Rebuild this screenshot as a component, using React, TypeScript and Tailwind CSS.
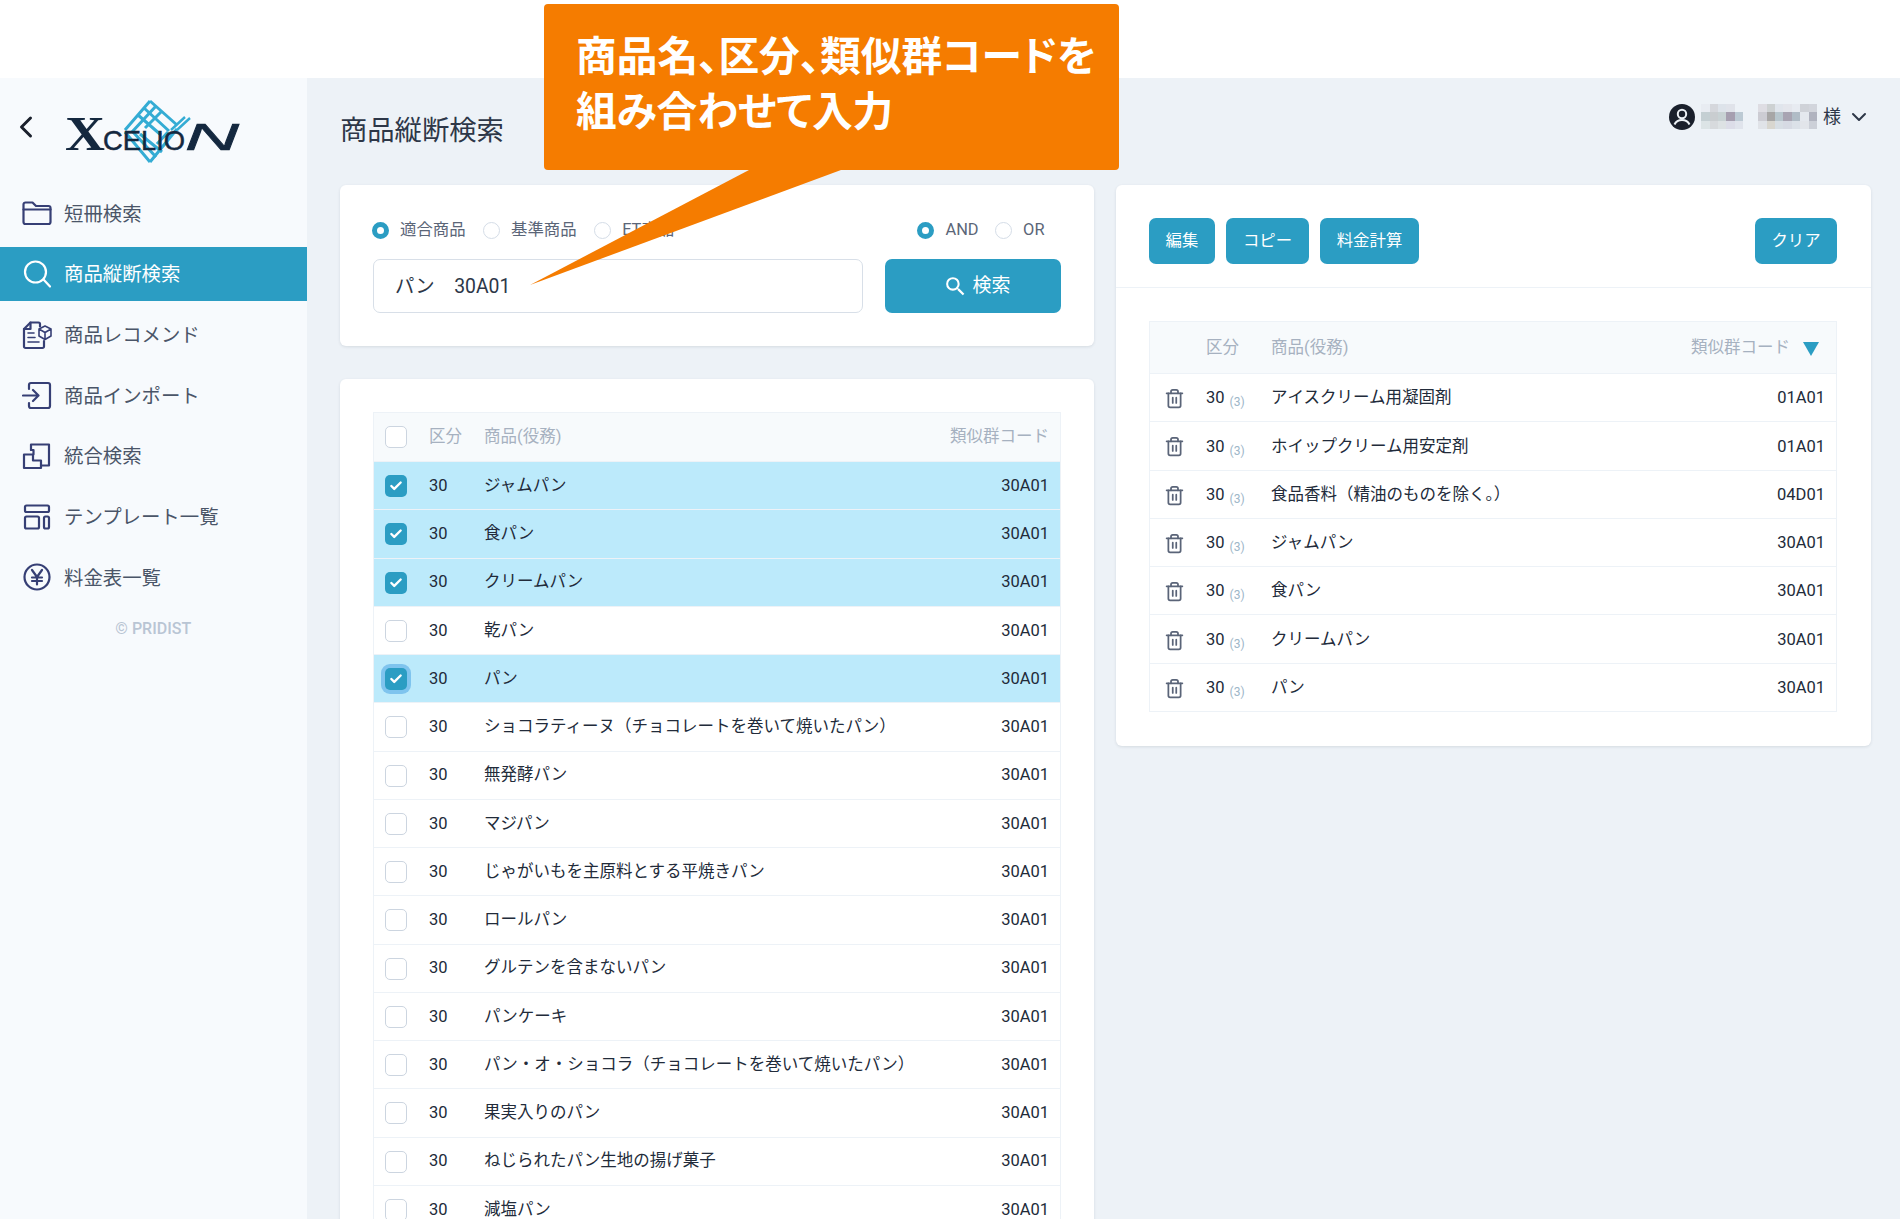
import { Check, ChevronDown, ChevronLeft, Trash2 } from "lucide-react";
import { MdSearch } from "react-icons/md";

const menuItems = [
  { label: "短冊検索", icon: "folder" },
  { label: "商品縦断検索", icon: "search", active: true },
  { label: "商品レコメンド", icon: "recommend" },
  { label: "商品インポート", icon: "import" },
  { label: "統合検索", icon: "merge" },
  { label: "テンプレート一覧", icon: "template" },
  { label: "料金表一覧", icon: "yen" },
];

const results = [
  { name: "ジャムパン", checked: true },
  { name: "食パン", checked: true },
  { name: "クリームパン", checked: true },
  { name: "乾パン" },
  { name: "パン", checked: true, focused: true },
  { name: "ショコラティーヌ（チョコレートを巻いて焼いたパン）" },
  { name: "無発酵パン" },
  { name: "マジパン" },
  { name: "じゃがいもを主原料とする平焼きパン" },
  { name: "ロールパン" },
  { name: "グルテンを含まないパン" },
  { name: "パンケーキ" },
  { name: "パン・オ・ショコラ（チョコレートを巻いて焼いたパン）" },
  { name: "果実入りのパン" },
  { name: "ねじられたパン生地の揚げ菓子" },
  { name: "減塩パン" },
];

const selected = [
  { name: "アイスクリーム用凝固剤", code: "01A01" },
  { name: "ホイップクリーム用安定剤", code: "01A01" },
  { name: "食品香料（精油のものを除く。）", code: "04D01" },
  { name: "ジャムパン", code: "30A01" },
  { name: "食パン", code: "30A01" },
  { name: "クリームパン", code: "30A01" },
  { name: "パン", code: "30A01" },
];

// mosaic over the user name
const nameBlur = [
  [
    ["#e8ecf2", "#d5d7dc", "#dde3ea", "#e0e3ea", "#edf2f7"],
    ["#c4cfd3", "#c9cdd0", "#c8d2d4", "#a69fb0", "#bccad4"],
    ["#dce4e6", "#d7dadd", "#dde2e4", "#dcdde8", "#e0e4ec"],
  ],
  [
    ["#dedde3", "#cdd1d2", "#e0e5ec", "#e4e6ec", "#e7ebf1", "#cfd2d8", "#d2d5dc"],
    ["#ccccd3", "#a7a6a6", "#b8c6cd", "#a8a4b2", "#b0bcc6", "#e4e8ee", "#b0b3bf"],
    ["#e0e3e8", "#d8d6cf", "#d7dee4", "#d6dae3", "#dbe1e8", "#e2e5ea", "#ccd0d8"],
  ],
];

const MenuIcon = ({ name, active }: { name: string; active?: boolean }) => {
  const common = {
    fill: "none",
    stroke: active ? "#ffffff" : "#363f75",
    strokeWidth: 2.2,
    strokeLinecap: "round" as const,
    strokeLinejoin: "round" as const,
  };
  return (
    <svg viewBox="0 0 30 30" className="w-[30px] h-[30px] shrink-0" {...common}>
      {name === "folder" && (
        <>
          <path d="M1.5 6.5a2 2 0 0 1 2-2h7l3.5 3.5h12.5a2 2 0 0 1 2 2v14a2 2 0 0 1-2 2h-23a2 2 0 0 1-2-2z" />
          <path d="M1.5 11.5h27" />
        </>
      )}
      {name === "search" && (
        <>
          <circle cx="13.5" cy="13" r="10.5" />
          <path d="M21.5 20.5l6.5 7" />
        </>
      )}
      {name === "recommend" && (
        <>
          <path d="M18 6.5V4a1.5 1.5 0 0 0-1.5-1.5h-8L2 9v17.5A1.5 1.5 0 0 0 3.5 28h17a1.5 1.5 0 0 0 1.5-1.5V21" />
          <path d="M8.5 2.5V9H2" />
          <path d="M6 13h6M6 17.5h7M6 22h11" strokeWidth="1.6" />
          <path d="M23 6l6 3v7l-6 3.5-6-3.5V9zM17 9l6 3.5L29 9M23 12.5v7" strokeWidth="1.6" />
        </>
      )}
      {name === "import" && (
        <>
          <path d="M7 9V5a2 2 0 0 1 2-2h17a2 2 0 0 1 2 2v21a2 2 0 0 1-2 2H9a2 2 0 0 1-2-2v-3" />
          <path d="M1 15.5h15M11 10l5.5 5.5L11 21" />
        </>
      )}
      {name === "merge" && (
        <>
          <path d="M9 9V3.5h18v21H19" />
          <path d="M2 13.5h9.5V9H9M2 13.5V27h17v-7.5h-8v-6" />
        </>
      )}
      {name === "template" && (
        <>
          <rect x="3" y="3.5" width="24" height="6.5" rx="1.5" />
          <rect x="3" y="14.5" width="14" height="12" rx="1.5" />
          <rect x="22" y="14.5" width="5" height="12" rx="1.5" />
        </>
      )}
      {name === "yen" && (
        <>
          <circle cx="15" cy="15" r="12.5" />
          <path d="M10 8l5 7 5-7M15 15v7.5M10 15.5h10M10 19h10" />
        </>
      )}
    </svg>
  );
};

const Logo = () => (
  <svg viewBox="0 0 176 66" className="w-[176px] h-[66px]">
    <g fill="none" stroke="#34acd4" strokeWidth="3">
      <path d="M85 2L60 31M91 7L67 33M97 12L80 29" />
      <path d="M85 2L112 26M79 9L104 32M73 16L96 36" />
      <path d="M60 33L85 63M68 33L91 58M75 35L97 53" />
      <path d="M85 63L112 30M92 45L103 33" />
      <path d="M106 31L120 18M112 31L125 19" strokeWidth="2.4" />
    </g>
    <text x="0" y="51" fontFamily="Liberation Serif" fontWeight="700" fontSize="48" fill="#14283f" textLength="40" lengthAdjust="spacingAndGlyphs">X</text>
    <text x="38" y="51" fontFamily="Liberation Sans" fontSize="28" fill="#14283f" stroke="#14283f" strokeWidth="0.5" textLength="82" lengthAdjust="spacingAndGlyphs">CELIO</text>
    <text x="120" y="51" fontFamily="Liberation Sans" fontStyle="italic" fontSize="36" fill="#14283f" stroke="#14283f" strokeWidth="0.6" textLength="54" lengthAdjust="spacingAndGlyphs">N</text>
  </svg>
);

const Radio = ({ label, checked }: { label: string; checked?: boolean }) => (
  <label className="flex items-center gap-[11px] text-[16.4px] text-[#5b6678]">
    <span className={checked ? "w-[17px] h-[17px] rounded-full bg-white border-[5px] border-[#2b9dc3]" : "w-[17px] h-[17px] rounded-full bg-white border border-[#d5dde7]"} />
    {label}
  </label>
);

const CheckBox = ({ checked, focused }: { checked?: boolean; focused?: boolean }) => (
  <span
    className={
      checked
        ? `w-[22px] h-[22px] rounded-[5px] bg-[#2b9dc3] flex items-center justify-center ${focused ? "ring-[4px] ring-[#7fc4ee]" : ""}`
        : "w-[22px] h-[22px] rounded-[5px] bg-white border border-[#ccd5e0]"
    }
  >
    {checked && <Check size={14} strokeWidth={4} color="#ffffff" />}
  </span>
);

const ActionButton = ({ label, className }: { label: string; className: string }) => (
  <button className={`h-[46px] rounded-[7px] bg-[#2b9dc3] pt-[1px] text-white text-[16.4px] ${className}`}>{label}</button>
);

export default function App() {
  return (
    <div className="relative h-[1219px] overflow-hidden bg-white font-['Roboto','Noto_Sans_CJK_JP',sans-serif]">
      <div className="h-[78px]" />
      <div className="flex h-[1141px]">
        {/* Sidebar */}
        <aside className="w-[306.5px] shrink-0 bg-[#f7fafd]">
          <div className="flex h-[108px] items-start pl-[8px] pt-[21px]">
            <ChevronLeft size={36} strokeWidth={2} color="#1a202c" className="mt-[10px] shrink-0" />
            <div className="ml-[21px]">
              <Logo />
            </div>
          </div>
          <nav className="flex flex-col gap-[6.2px]">
            {menuItems.map((item) => (
              <a
                key={item.label}
                className={
                  item.active
                    ? "flex h-[54.5px] items-center gap-[12px] pl-[22px] bg-[#2b9dc3] text-white text-[19.4px]"
                    : "flex h-[54.5px] items-center gap-[12px] pl-[22px] text-[#4a5568] text-[19.4px]"
                }
              >
                <MenuIcon name={item.icon} active={item.active} />
                <span className="mt-[2px]">{item.label}</span>
              </a>
            ))}
          </nav>
          <p className="mt-[12px] text-center text-[16px] font-medium text-[#b9c5d4]">© PRIDIST</p>
        </aside>

        {/* Main */}
        <main className="flex-1 bg-[#edf2f7] pl-[33.5px] pr-[29px] overflow-hidden">
          <div className="flex h-[107px] justify-between">
            <h1 className="mt-[31px] text-[27.3px] font-normal leading-[44px] text-[#2d3748]">商品縦断検索</h1>
            <div className="mt-[25.5px] flex h-[26px] items-center">
              <svg viewBox="0 0 26 26" className="w-[26px] h-[26px]">
                <circle cx="13" cy="13" r="13" fill="#1a202c" />
                <circle cx="13" cy="10" r="4.2" fill="none" stroke="#edf2f7" strokeWidth="2" />
                <path d="M5.5 20.5c1.5-3.2 4.5-4.5 7.5-4.5s6 1.3 7.5 4.5" fill="none" stroke="#edf2f7" strokeWidth="2" />
              </svg>
              <div className="ml-[6px] flex gap-[15px]">
                {nameBlur.map((block, i) => (
                  <div key={i} className="flex flex-col">
                    {block.map((row, r) => (
                      <div key={r} className="flex">
                        {row.map((color, c) => (
                          <span key={c} className="w-[8.4px] h-[8.4px]" style={{ backgroundColor: color }} />
                        ))}
                      </div>
                    ))}
                  </div>
                ))}
              </div>
              <span className="ml-[6px] text-[18px] text-[#2d3748]">様</span>
              <ChevronDown size={24} strokeWidth={2} color="#2d3748" className="ml-[6px]" />
            </div>
          </div>

          <div className="flex items-start gap-[22px]">
            {/* Left column */}
            <div className="w-[754px] shrink-0">
              <section className="rounded-[6px] bg-white px-[33px] pt-[33px] pb-[33px] shadow-[0_1px_3px_rgba(45,55,72,0.12)]">
                <div className="flex h-[24px] items-center justify-between pr-[16.5px]">
                  <div className="-ml-[1px] flex gap-[17.5px]">
                    <Radio label="適合商品" checked />
                    <Radio label="基準商品" />
                    <Radio label="ET商品" />
                  </div>
                  <div className="flex gap-[16.5px]">
                    <Radio label="AND" checked />
                    <Radio label="OR" />
                  </div>
                </div>
                <div className="mt-[17px] flex gap-[22px]">
                  <input
                    readOnly
                    value="パン　30A01"
                    className="h-[54px] w-[490px] rounded-[7px] border-[1.5px] border-[#d8dfe8] bg-white px-[21px] pb-[3px] text-[19.4px] text-[#2d3748] outline-none"
                  />
                  <button className="flex h-[54px] w-[176px] items-center justify-center gap-[4px] rounded-[7px] bg-[#2b9dc3] pl-[8px] text-[19px] text-white">
                    <MdSearch size={25} />
                    検索
                  </button>
                </div>
              </section>

              <section className="mt-[33px] rounded-[6px] bg-white px-[33px] pt-[33px] pb-[33px] shadow-[0_1px_3px_rgba(45,55,72,0.12)]">
                <div className="border border-[#edf2f7] text-[16.5px]">
                  <div className="flex h-[48px] items-center bg-[#f7fafc] pl-[11px] pr-[11px] text-[#a6b1c0]">
                    <span className="flex w-[44px]">
                      <CheckBox />
                    </span>
                    <span className="w-[55px]">区分</span>
                    <span className="flex-1">商品(役務)</span>
                    <span>類似群コード</span>
                  </div>
                  {results.map((row) => (
                    <div
                      key={row.name}
                      className={
                        row.checked
                          ? "flex h-[48.25px] items-center border-t border-[#edf2f7] bg-[#bceafb] pl-[11px] pr-[11px] pt-[1px] text-[#222b3a]"
                          : "flex h-[48.25px] items-center border-t border-[#edf2f7] pl-[11px] pr-[11px] pt-[1px] text-[#222b3a]"
                      }
                    >
                      <span className="flex w-[44px]">
                        <CheckBox checked={row.checked} focused={row.focused} />
                      </span>
                      <span className="w-[55px]">30</span>
                      <span className="flex-1">{row.name}</span>
                      <span>30A01</span>
                    </div>
                  ))}
                </div>
              </section>
            </div>

            {/* Right column */}
            <section className="w-[755px] shrink-0 rounded-[6px] bg-white pb-[34px] shadow-[0_1px_3px_rgba(45,55,72,0.12)]">
              <div className="flex justify-between border-b border-[#edf2f7] px-[33px] pt-[33px] pb-[23px] pr-[34px]">
                <div className="flex gap-[11px]">
                  <ActionButton label="編集" className="w-[66px]" />
                  <ActionButton label="コピー" className="w-[83px]" />
                  <ActionButton label="料金計算" className="w-[99px]" />
                </div>
                <ActionButton label="クリア" className="w-[82px]" />
              </div>
              <div className="mx-[33px] mr-[34px] mt-[33px] border border-[#edf2f7] text-[16.5px]">
                <div className="flex h-[51px] items-center bg-[#f7fafc] pr-[17px] pt-[2px] text-[#a6b1c0]">
                  <span className="w-[56px]" />
                  <span className="w-[65px]">区分</span>
                  <span className="flex-1">商品(役務)</span>
                  <span>類似群コード</span>
                  <svg viewBox="0 0 16 14" className="ml-[13px] w-[16px] h-[14px]">
                    <path d="M0 0h16L8 14z" fill="#2b9dc3" />
                  </svg>
                </div>
                {selected.map((row) => (
                  <div key={row.name} className="flex h-[48.3px] items-center border-t border-[#edf2f7] pr-[11px] pt-[2px] text-[#222b3a]">
                    <span className="flex w-[56px] justify-center pr-[8px]">
                      <Trash2 size={21} strokeWidth={2} color="#5a6478" />
                    </span>
                    <span className="flex w-[65px] items-baseline">
                      30
                      <span className="ml-[5px] translate-y-[3px] text-[12px] text-[#9db6c8]">(3)</span>
                    </span>
                    <span className="flex-1">{row.name}</span>
                    <span>{row.code}</span>
                  </div>
                ))}
              </div>
            </section>
          </div>
        </main>
      </div>

      {/* Callout */}
      <svg viewBox="0 0 335 125" className="absolute left-[525px] top-[165px] w-[335px] h-[125px]">
        <path d="M224 5H316L5 120z" fill="#f57c00" />
      </svg>
      <div className="absolute left-[544px] top-[4px] w-[575px] h-[166px] rounded-[4px] bg-[#f57c00] pl-[32px] pt-[26px] text-[40.7px] font-bold leading-[55px] text-white [font-feature-settings:'palt']">
        商品名、区分、類似群コードを
        <br />
        組み合わせて入力
      </div>
    </div>
  );
}
